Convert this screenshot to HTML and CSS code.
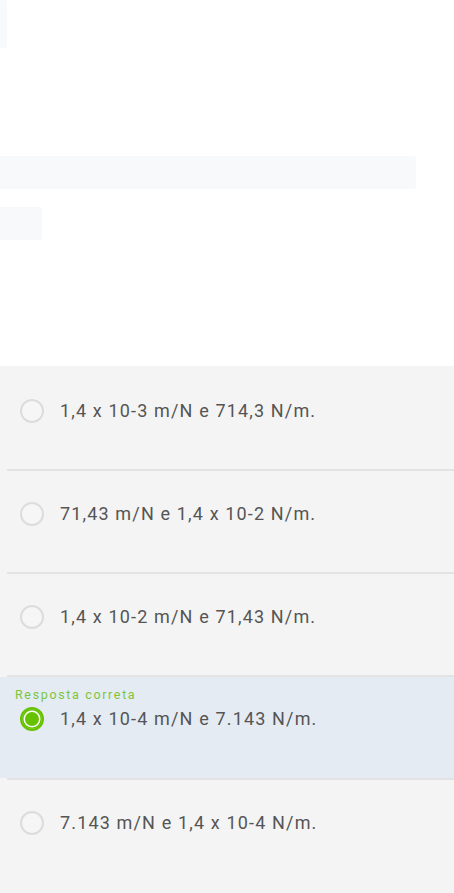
FILE: index.html
```html
<!DOCTYPE html>
<html lang="pt">
<head>
<meta charset="utf-8">
<title>Questão</title>
<link rel="stylesheet" href="styles.css">
</head>
<body>
<div class="page">
  <div class="skel skel-top"></div>
  <div class="skel skel-line"></div>
  <div class="skel skel-short"></div>

  <div class="options">
    <div class="option">
      <div class="row"><span class="radio"></span><span class="text">1,4 x 10-3 m/N e 714,3 N/m.</span></div>
    </div>
    <div class="divider"></div>
    <div class="option">
      <div class="row"><span class="radio"></span><span class="text">71,43 m/N e 1,4 x 10-2 N/m.</span></div>
    </div>
    <div class="divider"></div>
    <div class="option">
      <div class="row"><span class="radio"></span><span class="text">1,4 x 10-2 m/N e 71,43 N/m.</span></div>
    </div>
    <div class="divider"></div>
    <div class="option option-correct">
      <div class="label">Resposta correta</div>
      <div class="row"><span class="radio radio-checked"></span><span class="text">1,4 x 10-4 m/N e 7.143 N/m.</span></div>
    </div>
    <div class="divider"></div>
    <div class="option">
      <div class="row"><span class="radio"></span><span class="text">7.143 m/N e 1,4 x 10-4 N/m.</span></div>
    </div>
  </div>
</div>
</body>
</html>
```

FILE: styles.css
```css
html, body {
  margin: 0;
  padding: 0;
  background: #ffffff;
  font-family: Roboto, "Liberation Sans", sans-serif;
}

.page {
  height: 893px;
  display: flex;
  flex-direction: column;
  overflow: hidden;
}

.skel {
  background: #f8f9fb;
  border-radius: 0 2px 2px 0;
  flex: none;
}

.skel-top {
  width: 7px;
  height: 48px;
}

.skel-line {
  width: 416px;
  height: 33px;
  margin-top: 108px;
}

.skel-short {
  width: 42px;
  height: 33px;
  margin-top: 18px;
}

.options {
  margin-top: 126px;
  padding-top: 2px;
  background: #f4f4f4;
  flex: 1;
}

.option {
  box-sizing: border-box;
  height: 101px;
  padding: 31px 0 0 20px;
}

.option-correct {
  background: #e4ebf3;
  padding-top: 10px;
}

.label {
  font-size: 12.5px;
  line-height: 16px;
  color: #7cc63a;
  margin-left: -5px;
  margin-bottom: 4px;
  letter-spacing: 1.65px;
}

.divider {
  height: 2px;
  margin-left: 7px;
  background: #e3e3e3;
}

.row {
  display: flex;
  align-items: center;
  gap: 16px;
  height: 24px;
}

.radio {
  box-sizing: border-box;
  width: 24px;
  height: 24px;
  border-radius: 50%;
  border: 2px solid #dcdcdc;
  background: #f6f6f6;
  flex: none;
}

.radio-checked {
  border: 2px solid #66c200;
  background: #66c200;
  box-shadow: inset 0 0 0 1.5px #66c200, inset 0 0 0 3px #ffffff;
}

.text {
  font-size: 18px;
  line-height: 22px;
  color: #555555;
  letter-spacing: 1.15px;
}
```
